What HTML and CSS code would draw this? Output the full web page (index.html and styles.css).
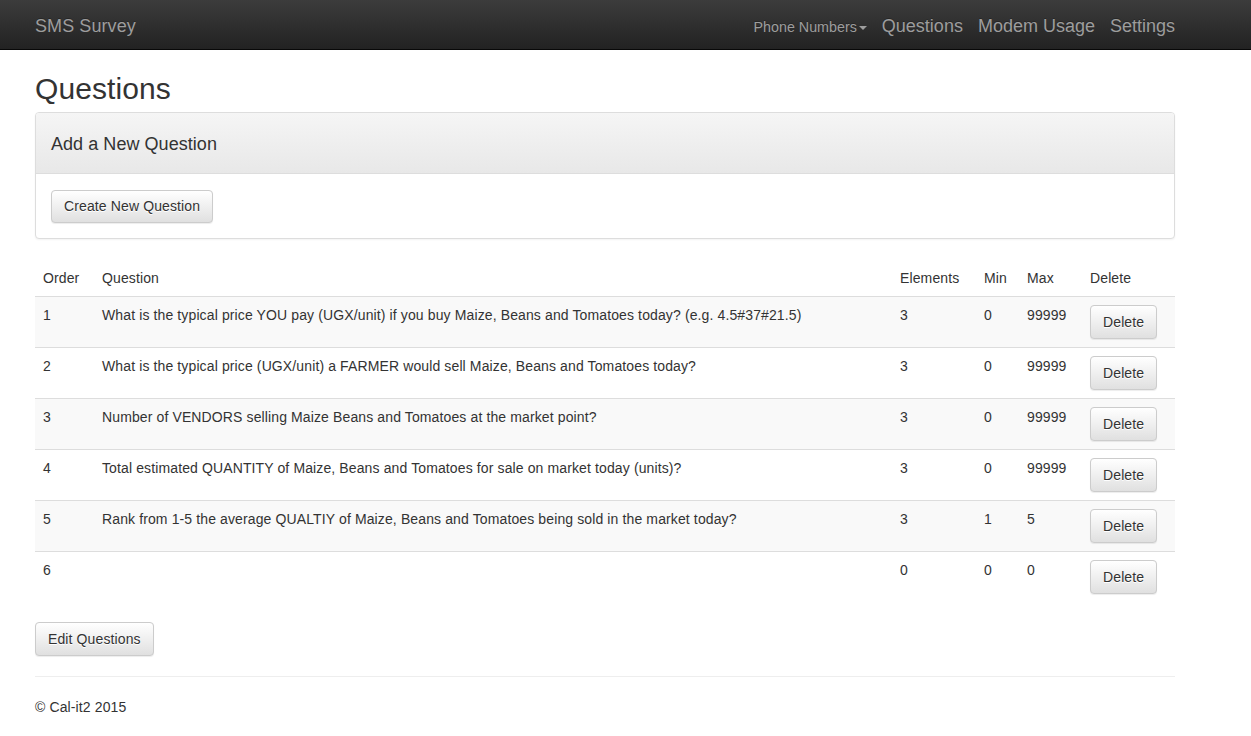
FILE: index.html
```html
<!DOCTYPE html>
<html lang="en">
<head>
<meta charset="utf-8">
<title>SMS Survey - Questions</title>
<link rel="stylesheet" href="styles.css">
</head>
<body>
<nav class="navbar">
  <div class="container navbar-inner">
    <a class="brand" href="#">SMS Survey</a>
    <ul class="nav">
      <li><a class="nav-small" href="#">Phone Numbers<span class="caret"></span></a></li>
      <li><a href="#">Questions</a></li>
      <li><a href="#">Modem Usage</a></li>
      <li><a href="#">Settings</a></li>
    </ul>
  </div>
</nav>

<main class="container">
  <h2 class="page-title">Questions</h2>

  <section class="panel">
    <div class="panel-heading">
      <h4 class="panel-title">Add a New Question</h4>
    </div>
    <div class="panel-body">
      <button class="btn" type="button">Create New Question</button>
    </div>
  </section>

  <table class="table">
    <colgroup>
      <col class="c-order">
      <col class="c-question">
      <col class="c-elements">
      <col class="c-min">
      <col class="c-max">
      <col class="c-delete">
    </colgroup>
    <thead>
      <tr><th>Order</th><th>Question</th><th>Elements</th><th>Min</th><th>Max</th><th>Delete</th></tr>
    </thead>
    <tbody>
      <tr><td>1</td><td>What is the typical price YOU pay (UGX/unit) if you buy Maize, Beans and Tomatoes today? (e.g. 4.5#37#21.5)</td><td>3</td><td>0</td><td>99999</td><td><button class="btn" type="button">Delete</button></td></tr>
      <tr><td>2</td><td>What is the typical price (UGX/unit) a FARMER would sell Maize, Beans and Tomatoes today?</td><td>3</td><td>0</td><td>99999</td><td><button class="btn" type="button">Delete</button></td></tr>
      <tr><td>3</td><td>Number of VENDORS selling Maize Beans and Tomatoes at the market point?</td><td>3</td><td>0</td><td>99999</td><td><button class="btn" type="button">Delete</button></td></tr>
      <tr><td>4</td><td>Total estimated QUANTITY of Maize, Beans and Tomatoes for sale on market today (units)?</td><td>3</td><td>0</td><td>99999</td><td><button class="btn" type="button">Delete</button></td></tr>
      <tr><td>5</td><td>Rank from 1-5 the average QUALTIY of Maize, Beans and Tomatoes being sold in the market today?</td><td>3</td><td>1</td><td>5</td><td><button class="btn" type="button">Delete</button></td></tr>
      <tr><td>6</td><td></td><td>0</td><td>0</td><td>0</td><td><button class="btn" type="button">Delete</button></td></tr>
    </tbody>
  </table>

  <button class="btn" type="button">Edit Questions</button>

  <hr class="rule">

  <footer class="footer">© Cal-it2 2015</footer>
</main>
</body>
</html>
```

FILE: styles.css
```css
* { box-sizing: border-box; }

html, body {
  margin: 0;
  padding: 0;
}

body {
  font-family: "Liberation Sans", Arial, Helvetica, sans-serif;
  font-size: 14px;
  line-height: 1.42857143;
  letter-spacing: 0.12px;
  color: #333;
  background: #fff;
}

.container {
  width: 1170px;
  margin-left: 20px;
  padding: 0 15px;
}

/* Navbar */
.navbar {
  height: 50px;
  background-image: linear-gradient(to bottom, #3c3c3c 0, #222 100%);
  border-bottom: 1px solid #080808;
}

.navbar-inner {
  display: flex;
  align-items: baseline;
  justify-content: space-between;
  height: 49px;
}

.brand {
  font-size: 18px;
  line-height: 20px;
  padding-top: 16px;
  letter-spacing: 0.08px;
  color: #9d9d9d;
  text-decoration: none;
  text-shadow: 0 -1px 0 rgba(0, 0, 0, .25);
}

.nav {
  list-style: none;
  margin: 0;
  padding: 0;
  display: flex;
  align-items: baseline;
  gap: 15px;
}

.nav a {
  display: inline-block;
  font-size: 18px;
  line-height: 20px;
  letter-spacing: 0;
  color: #9d9d9d;
  text-decoration: none;
  text-shadow: 0 -1px 0 rgba(0, 0, 0, .25);
}

.nav a.nav-small {
  font-size: 14.3px;
  letter-spacing: 0;
}

.caret {
  display: inline-block;
  width: 0;
  height: 0;
  margin-left: 2px;
  vertical-align: middle;
  border-top: 4px solid #9d9d9d;
  border-left: 4px solid transparent;
  border-right: 4px solid transparent;
}

/* Title */
.page-title {
  font-size: 30px;
  font-weight: 500;
  line-height: 1.1;
  letter-spacing: 0.1px;
  margin: 22px 0 7px;
  color: #333;
}

/* Panel */
.panel {
  border: 1px solid #ddd;
  border-radius: 4px;
  margin-bottom: 21px;
  box-shadow: 0 1px 2px rgba(0, 0, 0, .05);
  background: #fff;
}

.panel-heading {
  padding: 10px 15px;
  background-image: linear-gradient(to bottom, #f5f5f5 0, #e8e8e8 100%);
  border-bottom: 1px solid #ddd;
  border-radius: 3px 3px 0 0;
}

.panel-title {
  font-size: 18px;
  font-weight: 500;
  line-height: 1.1;
  letter-spacing: 0.05px;
  margin: 12px 0 8px;
  color: #333;
}

.panel-body {
  padding: 16px 15px 15px;
}

/* Buttons */
.btn {
  display: inline-block;
  font-family: inherit;
  font-size: 14px;
  line-height: 20px;
  letter-spacing: inherit;
  padding: 6px 12px;
  color: #333;
  border: 1px solid #ccc;
  border-radius: 4px;
  background-image: linear-gradient(to bottom, #fff 0, #e0e0e0 100%);
  box-shadow: inset 0 1px 0 rgba(255, 255, 255, .15), 0 1px 1px rgba(0, 0, 0, .075);
  text-shadow: 0 1px 0 #fff;
  cursor: pointer;
}

.panel-body .btn {
  height: 33px;
  padding-top: 5px;
  padding-bottom: 6px;
}

/* Table */
.table {
  width: 100%;
  table-layout: fixed;
  border-collapse: collapse;
  border-spacing: 0;
  margin-bottom: 20px;
}

.c-order { width: 59px; }
.c-elements { width: 84px; }
.c-min { width: 43px; }
.c-max { width: 63px; }
.c-delete { width: 93px; }

.table th,
.table td {
  padding: 8px;
  line-height: 20px;
  text-align: left;
  vertical-align: top;
}

.table th {
  font-weight: normal;
  vertical-align: bottom;
  border-bottom: 1px solid #ddd;
}

.table td {
  border-top: 1px solid #ddd;
}

.table tbody tr:first-child td {
  border-top: 0;
}

.table tbody tr:nth-child(odd) {
  background: #f9f9f9;
}

/* Footer */
.rule {
  margin: 20px 0;
  border: 0;
  border-top: 1px solid #eee;
}

.footer {
  line-height: 20px;
}
```
